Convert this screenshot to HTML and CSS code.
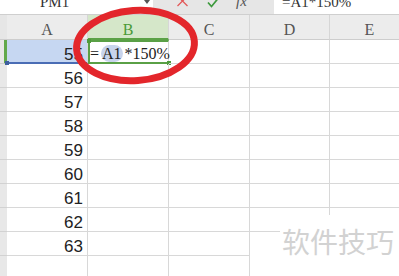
FILE: index.html
```html
<!DOCTYPE html>
<html>
<head>
	<meta charset="utf-8">
	<title>表格 - 公式</title>
	<link rel="stylesheet" href="styles.css">
</head>
<body>
	<div class="bar">
		<div class="namebox"><span class="txt">PM1</span><span class="arrow"></span></div>
		<div class="tools">
			<svg class="ico" width="11" height="7" viewBox="0 0 11 7"><path d="M0.5 -4 L10.5 6 M10.5 -4 L0.5 6" stroke="#e25a5a" stroke-width="1.3" fill="none"/></svg>
			<svg class="ico ok" width="12" height="8" viewBox="0 0 12 8"><path d="M1 2.5 L4.5 6.5 L11 -1.5" stroke="#3d9a3d" stroke-width="1.7" fill="none"/></svg>
			<span class="fx">fx</span>
		</div>
		<div class="formula"><span class="txt">=A1*150%</span></div>
	</div>

	<div class="sheet">
		<div class="hd corner"></div><div class="hd">A</div><div class="hd sel">B</div><div class="hd">C</div><div class="hd">D</div><div class="hd">E</div>

		<div class="rh on"></div>
		<div class="c num selA">55</div>
		<div class="c edit"><span>=</span><span class="ref">A1</span><span>*150%</span></div>
		<div class="c"></div><div class="c"></div><div class="c"></div>

		<div class="rh"></div><div class="c num">56</div><div class="c"></div><div class="c"></div><div class="c"></div><div class="c"></div>
		<div class="rh"></div><div class="c num">57</div><div class="c"></div><div class="c"></div><div class="c"></div><div class="c"></div>
		<div class="rh"></div><div class="c num">58</div><div class="c"></div><div class="c"></div><div class="c"></div><div class="c"></div>
		<div class="rh"></div><div class="c num">59</div><div class="c"></div><div class="c"></div><div class="c"></div><div class="c"></div>
		<div class="rh"></div><div class="c num">60</div><div class="c"></div><div class="c"></div><div class="c"></div><div class="c"></div>
		<div class="rh"></div><div class="c num">61</div><div class="c"></div><div class="c"></div><div class="c"></div><div class="c"></div>
		<div class="rh"></div><div class="c num">62</div><div class="c"></div><div class="c"></div><div class="c"></div><div class="c"></div>
		<div class="rh"></div><div class="c num">63</div><div class="c"></div><div class="c"></div><div class="c"></div><div class="c"></div>
		<div class="rh"></div><div class="c num"></div><div class="c"></div><div class="c"></div><div class="c"></div><div class="c"></div>
	</div>

	<!-- 水印 -->
	<div class="wm">软件技巧</div>

	<!-- 红圈标注 -->
	<svg class="mark" width="399" height="276"><ellipse cx="135.5" cy="45.5" rx="59" ry="35" fill="none" stroke="#e3262b" stroke-width="7" transform="rotate(-4 135.5 45.5)"/></svg>
</body>
</html>
```

FILE: styles.css
```css
body,div,span{margin:0;padding:0;}
*{box-sizing:border-box;}
body{
	width:399px;height:276px;overflow:hidden;position:relative;
	background:#fff;color:#333;
	font-family:"Liberation Serif","Noto Sans CJK SC",serif;
}

/* 顶部编辑栏 */
.bar{display:flex;height:15px;border-bottom:1px solid #cfcfcf;overflow:hidden;}
.bar .txt{display:block;font-size:15px;line-height:16px;margin-top:-6px;color:#333;}
.namebox{width:153px;background:#fff;display:flex;}
.namebox .txt{margin-left:40px;}
.arrow{margin-left:auto;margin-right:3px;width:0;height:0;border-left:3.5px solid transparent;border-right:3.5px solid transparent;border-top:4px solid #555;}
.tools{width:121px;background:#e6e6e6;display:flex;align-items:flex-start;padding-left:24px;}
.ico{display:block;}
.ok{margin-left:19px;}
.fx{display:block;margin-left:17px;font-style:italic;font-size:15px;line-height:16px;margin-top:-7px;color:#555;}
.formula{flex:1;background:#fff;padding-left:8px;}

/* 表格 */
.sheet{display:grid;grid-template-columns:7px 81px 81px 81px 80px 80px;grid-template-rows:25px;grid-auto-rows:24px;width:410px;}
.hd{background:#ececec;border-right:1px solid #d6d6d6;border-bottom:1px solid #cdcdcd;text-align:center;font-size:16px;line-height:20px;padding-top:5px;color:#555;}
.hd.corner{background:#e6e6e6;border-right:none;}
.hd.sel{background:#d5e7c9;color:#4a9a38;border-bottom:2px solid #5ba246;}
.rh{background:#e8e8e8;border-bottom:1px solid #d2d2d2;}
.rh.on{border-right:3px solid #62a94c;}
.c{border-right:1px solid #d8d8d8;border-bottom:1px solid #d8d8d8;position:relative;}
.num{text-align:right;padding-right:4px;padding-top:5px;font-family:"Liberation Sans",sans-serif;font-size:17px;line-height:19px;color:#222;}
.selA{background:#c6d7f2;border-bottom:2px solid #4a6db5;}
.selA:after{content:"";position:absolute;left:-2px;bottom:-3px;width:4px;height:4px;background:#3f5f9f;}
.edit{border:2px solid #5aa046;border-right:1px solid #d8d8d8;padding-top:3px;font-size:16px;line-height:18px;white-space:nowrap;color:#222;}
.edit:after{content:"";position:absolute;right:-3px;bottom:-3px;width:4px;height:4px;background:#4f9a3c;}
.edit:before{content:"";position:absolute;left:-3px;top:-3px;width:4px;height:4px;background:#4f9a3c;}
.ref{background:#c8d4ec;border-radius:9px;padding:0 1px;margin:0 2px;}

.wm{
	position:absolute;left:250px;top:215px;width:149px;height:61px;
	background:#fff;
	clip-path:polygon(30px 0,100% 0,100% 100%,0 100%,0 27px,30px 27px);
	font-family:"Noto Sans CJK SC",sans-serif;font-size:28px;line-height:28px;color:#d2d2d2;
	padding:12px 0 0 32px;
}
.mark{position:absolute;left:0;top:0;}
```
